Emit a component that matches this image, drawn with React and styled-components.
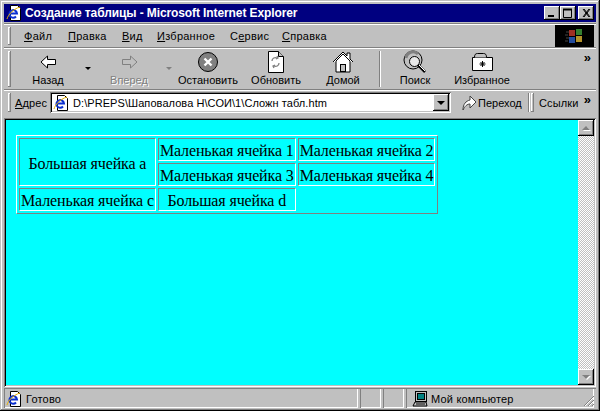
import React from 'react';
import styled, { createGlobalStyle } from 'styled-components';

const Global = createGlobalStyle`
  html, body { margin: 0; padding: 0; background: #c0c0c0; }
  * { box-sizing: border-box; }
`;
const UI = `"Liberation Sans", Arial, sans-serif`;

const Win = styled.div`
  width: 600px; height: 411px; background: #c0c0c0; overflow: hidden;
  padding: 4px 4px 3px 4px; display: flex; flex-direction: column;
  font: 11px ${UI}; color: #000;
  box-shadow: inset -1px -1px 0 #000, inset 1px 1px 0 #c0c0c0, inset -2px -2px 0 #808080, inset 2px 2px 0 #fff;
`;
const TitleBar = styled.div`
  height: 18px; flex: none; background: #000080; color: #fff; display: flex; align-items: center;
  padding: 0 2px 0 2px; font: bold 12px ${UI}; letter-spacing: -.1px;
`;
const TitleText = styled.span`margin-left: 3px; flex: 1; white-space: nowrap;`;
const CapBtns = styled.div`display: flex;`;
const Cap = styled.div`
  width: 16px; height: 14px; background: #c0c0c0; display: flex; align-items: center; justify-content: center;
  margin-left: ${p => p.$gap || 0}px;
  box-shadow: inset -1px -1px 0 #000, inset 1px 1px 0 #fff, inset -2px -2px 0 #808080;
`;
const Rebar = styled.div`
  display: flex; height: ${p => p.$h}px; flex: none; border-top: 1px solid #fff;
  box-shadow: 0 -1px 0 #808080; margin-top: ${p => p.$mt || 0}px; position: relative; align-items: stretch;
`;
const Grip = styled.div`
  width: 3px; flex: none; margin: 2px 0 2px ${p => p.$ml ?? 4}px; background: #c0c0c0;
  box-shadow: inset -1px -1px 0 #808080, inset 1px 1px 0 #fff;
`;
const MenuList = styled.div`display: flex; align-items: center; flex: 1; padding-left: 13px; height: 100%;`;
const MenuItem = styled.span`width: ${p => p.$w}px; flex: none; white-space: nowrap; letter-spacing: .25px;`;
const U = styled.span`text-decoration: underline;`;
const Brand = styled.div`
  width: 39px; margin-right: 2px; background: #000; display: flex; align-items: center; justify-content: center;
`;
const Tools = styled.div`display: flex; flex: 1; padding-left: 13px; position: relative;`;
const ToolBtn = styled.div`
  width: ${p => p.$w}px; flex: none; display: flex; flex-direction: column; align-items: center;
  padding-top: 1px; white-space: nowrap;
  color: ${p => p.$off ? '#808080' : '#000'};
  text-shadow: ${p => p.$off ? '1px 1px 0 #fff' : 'none'};
`;
const IconBox = styled.div`height: 24px; display: flex; align-items: center; justify-content: center;`;
const Label = styled.div`margin-top: 0; line-height: 13px;`;
const DropCaret = styled.div`
  width: ${p => p.$w}px; flex: none; display: flex; justify-content: center; padding-top: 18px;
  &::after { content: ''; width: 0; height: 0; border: 3px solid transparent; border-bottom: 0;
    border-top: 3px solid ${p => p.$off ? '#808080' : '#000'}; }
`;
const Sep = styled.div`
  width: 2px; flex: none; margin: 2px 0 2px ${p => p.$ml || 0}px; background: #808080; border-right: 1px solid #fff;
`;
const More = styled.span`
  position: absolute; right: 5px; top: ${p => p.$top}px; font: bold 13px ${UI}; line-height: 11px;
`;
const AddrLabel = styled.span`margin: 0 4px 0 4px; align-self: center; width: 31px; letter-spacing: .1px;`;
const Combo = styled.div`
  width: 401px; height: 21px; align-self: center; background: #fff; display: flex; align-items: center;
  box-shadow: inset 1px 1px 0 #808080, inset -1px -1px 0 #fff, inset 2px 2px 0 #000, inset -2px -2px 0 #c0c0c0;
  padding: 0 2px 0 3px; font-size: 11px;
`;
const ComboText = styled.span`flex: 1; margin-left: 4px; white-space: nowrap; letter-spacing: .07px;`;
const ComboBtn = styled.div`
  width: 16px; height: 17px; background: #c0c0c0; display: flex; align-items: center; justify-content: center;
  box-shadow: inset -1px -1px 0 #000, inset 1px 1px 0 #fff, inset -2px -2px 0 #808080;
  &::after { content: ''; border: 4px solid transparent; border-top: 4px solid #000; border-bottom: 0; }
`;
const GoBtn = styled.div`display: flex; align-items: center; width: 77px; padding-left: 11px; flex: none;`;
const GoText = styled.span`margin-left: 1px;`;
const LinksText = styled.span`margin-left: 5px; align-self: center; letter-spacing: .15px;`;
const Body = styled.div`
  flex: 1; margin-top: 4px; display: flex; min-height: 0; padding: 2px;
  box-shadow: inset 1px 1px 0 #808080, inset -1px -1px 0 #fff, inset 2px 2px 0 #000, inset -2px -2px 0 #c0c0c0;
`;
const Page = styled.div`flex: 1; background: #00ffff; padding: 15px 0 0 10px;`;
const Table = styled.table`
  border-collapse: separate; border-spacing: 2px; font: 16px "Liberation Serif", "Times New Roman", serif;
  letter-spacing: -.13px;
  border: 1px solid; border-color: #fff #808080 #808080 #fff; color: #000;
`;
const Td = styled.td`
  border: 1px solid; border-color: #808080 #fff #fff #808080; padding: 2px 1px 0; text-align: center; white-space: nowrap;
  height: 23px; line-height: 19px;
`;
const Scroll = styled.div`
  width: 16px; flex: none; display: flex; flex-direction: column;
  background: repeating-conic-gradient(#c0c0c0 0 25%, #fff 0 50%) 0 0 / 2px 2px;
`;
const ScrollBtn = styled.div`
  width: 16px; height: 16px; background: #c0c0c0; display: flex; align-items: center; justify-content: center;
  box-shadow: inset -1px -1px 0 #000, inset 1px 1px 0 #fff, inset -2px -2px 0 #808080;
  &::after { content: ''; border: 4px solid transparent;
    ${p => p.$up ? 'border-bottom: 4px solid #808080; border-top: 0;' : 'border-top: 4px solid #808080; border-bottom: 0;'}
    filter: drop-shadow(1px 1px 0 #fff); }
`;
const Track = styled.div`flex: 1;`;
const Status = styled.div`
  height: 20px; flex: none; margin-top: 1px; display: flex; border-top: 1px solid #808080; position: relative;
`;
const Pane = styled.div`
  width: ${p => p.$w}px; flex: ${p => p.$grow ? 1 : 'none'}; display: flex; align-items: center; margin-right: 2px;
  padding-left: ${p => p.$pad ?? 2}px;
  box-shadow: inset 1px 0 0 #808080, inset -1px -1px 0 #fff; letter-spacing: .2px; white-space: nowrap;
`;
const PaneText = styled.span`margin-left: ${p => p.$ml ?? 4}px;`;
const GripSvg = styled.svg`position: absolute; right: 1px; bottom: 1px;`;

const IE = ({ page }) => (
  <svg width="16" height="16" viewBox="0 0 16 16">
    {page && <path d="M4.500 .500h7l3 3v12h-10z" fill="#fff" stroke="#000" />}
    <path d="M3.500 8.500h7.500A3.800 3.800 0 1 0 10 11.500" fill="none" stroke="#0a2fd0" strokeWidth="2" />
    <path d="M1 14C2 10 7 4 14 2" fill="none" stroke="#e8b000" />
  </svg>
);

const Back = ({ c = '#fff', s = '#000', flip }) => (
  <svg width="17" height="14" viewBox="0 0 17 14" style={flip ? { transform: 'scaleX(-1)' } : undefined}>
    <path d="M7.5 1 1 7l6.500 6V9.500H15.500V4.500H7.500z" fill={c} stroke={s} />
  </svg>
);

const Win9xLogo = () => (
  <svg width="20" height="18" viewBox="0 0 20 18">
    <rect x="4" y="3" width="6" height="6" fill="#a03024" />
    <rect x="11" y="2" width="6" height="6" fill="#357f30" />
    <rect x="4" y="10" width="6" height="6" fill="#244c9e" />
    <rect x="11" y="9" width="6" height="6" fill="#b3932a" />
    <path d="M1 5h3M0 8h3M1 11h3M0 14h3" stroke="#444" />
  </svg>
);

const Stop = () => (
  <svg width="22" height="22" viewBox="0 0 22 22">
    <circle cx="11" cy="11" r="9.500" fill="#808080" stroke="#000" />
    <path d="M7.500 7.500l7 7M14.500 7.500l-7 7" stroke="#fff" strokeWidth="2.400" />
  </svg>
);
const Refresh = () => (
  <svg width="18" height="22" viewBox="0 0 18 22">
    <path d="M1.500 .500h10l5 5v16h-15z" fill="#fff" stroke="#000" />
    <path d="M11.500 .500v5h5" fill="#c0c0c0" stroke="#000" />
    <path d="M5 10c0-3 3-4 5-3M10 5l1 2-2 1M12 12c0 3-3 4-5 3M7 17l-1-2 2-1" fill="none" stroke="#808080" strokeWidth="1.300" />
  </svg>
);
const Home = () => (
  <svg width="22" height="22" viewBox="0 0 22 22">
    <path d="M1 11 11 1l4 4V2h3v6l3 3" fill="#fff" stroke="#000" />
    <path d="M4 10v11h14V10L11 3z" fill="#fff" stroke="#000" />
    <rect x="8.500" y="13.500" width="5" height="7" fill="#c0c0c0" stroke="#000" />
  </svg>
);
const Search = () => (
  <svg width="24" height="24" viewBox="0 0 24 24">
    <circle cx="10" cy="10" r="9" fill="#c0c0c0" stroke="#000" />
    <path d="M3 8A7 7 0 0 1 15 4" fill="none" stroke="#808080" strokeWidth="3" />
    <circle cx="11.500" cy="11.500" r="5" fill="#e8e8e8" stroke="#000" />
    <path d="M15 15l7 7" stroke="#000" strokeWidth="2.500" />
    <path d="M16 15l6 6" stroke="#fff" />
  </svg>
);
const Fav = () => (
  <svg width="21" height="18" viewBox="0 0 21 18">
    <path d="M.500 4.500h20v13H.500z" fill="#fff" stroke="#000" />
    <path d="M2.500 4.500c0-3 1-4 3-4h6c2 0 3 1 3 4" fill="#c0c0c0" stroke="#000" />
    <path d="M10.500 8v6M7.500 11h6M8.500 9l4 4M12.500 9l-4 4" stroke="#000" />
  </svg>
);
const Go = () => (
  <svg width="15" height="17" viewBox="0 0 15 17">
    <path d="M1 16C1 10 4 7 8 6V2l6 6-6 6v-4c-3 0-5 2-7 6z" fill="#fff" stroke="#404040" />
  </svg>
);
const PC = () => (
  <svg width="16" height="16" viewBox="0 0 16 16">
    <rect x="3.500" y=".500" width="11" height="10" fill="#c0c0c0" stroke="#000" />
    <rect x="5.500" y="2.500" width="7" height="6" fill="#008080" stroke="#000" />
    <path d="M1 15l2-4h11l1 4z" fill="#c0c0c0" stroke="#000" />
    <path d="M4 13h9" stroke="#000" />
  </svg>
);

export default function App() {
  return (
    <Win>
      <Global />
      <TitleBar>
        <IE page />
        <TitleText>Создание таблицы - Microsoft Internet Explorer</TitleText>
        <CapBtns>
          <Cap><svg width="8" height="8"><rect x="0" y="6" width="6" height="2" /></svg></Cap>
          <Cap><svg width="10" height="10"><path d="M.500 1.500h8v8h-8z" fill="none" stroke="#000" /><path d="M0 1.500h9" stroke="#000" strokeWidth="2" /></svg></Cap>
          <Cap $gap={2}><svg width="9" height="8"><path d="M1 0l6 8M2 0l6 8M7 0 1 8M8 0 2 8" stroke="#000" /></svg></Cap>
        </CapBtns>
      </TitleBar>
      <Rebar $h={23} $mt={2}>
        <Grip />
        <MenuList>
          <MenuItem $w={44}><U>Ф</U>айл</MenuItem>
          <MenuItem $w={54}><U>П</U>равка</MenuItem>
          <MenuItem $w={35}><U>В</U>ид</MenuItem>
          <MenuItem $w={73}><U>И</U>збранное</MenuItem>
          <MenuItem $w={52}>С<U>е</U>рвис</MenuItem>
          <MenuItem $w={60}><U>С</U>правка</MenuItem>
        </MenuList>
        <Brand><Win9xLogo /></Brand>
      </Rebar>
      <Rebar $h={41} $mt={1}>
        <Grip />
        <Tools>
          <ToolBtn $w={48}><IconBox><Back /></IconBox><Label>Назад</Label></ToolBtn>
          <DropCaret $w={32} />
          <ToolBtn $w={50} $off><IconBox><Back flip c="#c0c0c0" s="#808080" /></IconBox><Label>Вперед</Label></ToolBtn>
          <DropCaret $w={30} $off />
          <ToolBtn $w={48}><IconBox><Stop /></IconBox><Label>Остановить</Label></ToolBtn>
          <ToolBtn $w={88}><IconBox><Refresh /></IconBox><Label>Обновить</Label></ToolBtn>
          <ToolBtn $w={46}><IconBox><Home /></IconBox><Label>Домой</Label></ToolBtn>
          <Sep $ml={13} />
          <ToolBtn $w={68}><IconBox><Search /></IconBox><Label>Поиск</Label></ToolBtn>
          <ToolBtn $w={66}><IconBox><Fav /></IconBox><Label>Избранное</Label></ToolBtn>
          <More $top={3}>»</More>
        </Tools>
      </Rebar>
      <Rebar $h={24} $mt={1}>
        <Grip />
        <AddrLabel><U>А</U>дрес</AddrLabel>
        <Combo>
          <IE page />
          <ComboText>D:\PREPS\Шаповалова Н\СОИ\1\Сложн табл.htm</ComboText>
          <ComboBtn />
        </Combo>
        <GoBtn><Go /><GoText>Переход</GoText></GoBtn>
        <Sep />
        <Grip $ml={1} />
        <LinksText>Ссылки</LinksText>
        <More $top={3}>»</More>
      </Rebar>
      <Body>
        <Page>
          <Table>
            <tbody>
              <tr>
                <Td rowSpan={2}>Большая ячейка a</Td>
                <Td>Маленькая ячейка 1</Td>
                <Td>Маленькая ячейка 2</Td>
              </tr>
              <tr>
                <Td>Маленькая ячейка 3</Td>
                <Td>Маленькая ячейка 4</Td>
              </tr>
              <tr>
                <Td>Маленькая ячейка c</Td>
                <Td>Большая ячейка d</Td>
              </tr>
            </tbody>
          </Table>
        </Page>
        <Scroll>
          <ScrollBtn $up />
          <Track />
          <ScrollBtn />
        </Scroll>
      </Body>
      <Status>
        <Pane $grow $w={0}><IE page /><PaneText>Готово</PaneText></Pane>
        <Pane $w={21} />
        <Pane $w={21} />
        <Pane $w={188} $pad={6}><PC /><PaneText $ml={3}>Мой компьютер</PaneText></Pane>
        <GripSvg width="12" height="12"><path d="M11 1 1 11M11 5l-6 6M11 9l-2 2" stroke="#808080" /><path d="M11 2 2 11M11 6l-5 5M11 10l-1 1" stroke="#fff" /></GripSvg>
      </Status>
    </Win>
  );
}
